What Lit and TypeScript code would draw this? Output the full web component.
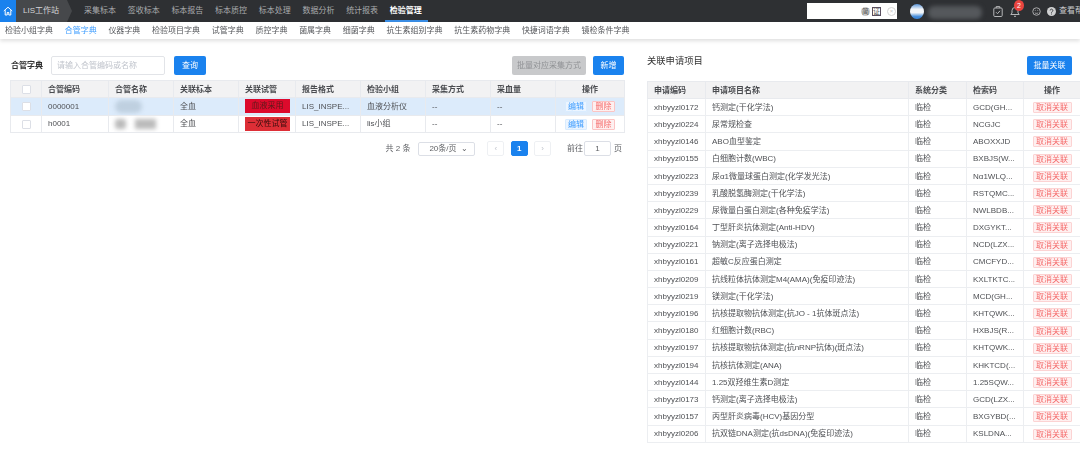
import { LitElement, html, css } from "lit";
import { customElement } from "lit/decorators.js";

const NAV = ["采集标本","签收标本","标本报告","标本质控","标本处理","数据分析","统计报表"];
const SUB = ["检验小组字典","合管字典","仪器字典","检验项目字典","试管字典","质控字典","菌属字典","细菌字典","抗生素组别字典","抗生素药物字典","快捷词语字典","镜检条件字典"];
const ROWS: [string,string,string][] = [
["xhbyyzl0172","钙测定(干化学法)","GCD(GH..."],
["xhbyyzl0224","尿常规检查","NCGJC"],
["xhbyyzl0146","ABO血型鉴定","ABOXXJD"],
["xhbyyzl0155","白细胞计数(WBC)","BXBJS(W..."],
["xhbyyzl0223","尿α1微量球蛋白测定(化学发光法)","Nα1WLQ..."],
["xhbyyzl0239","乳酸脱氢酶测定(干化学法)","RSTQMC..."],
["xhbyyzl0229","尿微量白蛋白测定(各种免疫学法)","NWLBDB..."],
["xhbyyzl0164","丁型肝炎抗体测定(Anti-HDV)","DXGYKT..."],
["xhbyyzl0221","钠测定(离子选择电极法)","NCD(LZX..."],
["xhbyyzl0161","超敏C反应蛋白测定","CMCFYD..."],
["xhbyyzl0209","抗线粒体抗体测定M4(AMA)(免疫印迹法)","KXLTKTC..."],
["xhbyyzl0219","镁测定(干化学法)","MCD(GH..."],
["xhbyyzl0196","抗核提取物抗体测定(抗JO - 1抗体斑点法)","KHTQWK..."],
["xhbyyzl0180","红细胞计数(RBC)","HXBJS(R..."],
["xhbyyzl0197","抗核提取物抗体测定(抗nRNP抗体)(斑点法)","KHTQWK..."],
["xhbyyzl0194","抗核抗体测定(ANA)","KHKTCD(..."],
["xhbyyzl0144","1.25双羟维生素D测定","1.25SQW..."],
["xhbyyzl0173","钙测定(离子选择电极法)","GCD(LZX..."],
["xhbyyzl0157","丙型肝炎病毒(HCV)基因分型","BXGYBD(..."],
["xhbyyzl0206","抗双链DNA测定(抗dsDNA)(免疫印迹法)","KSLDNA..."],
];

@customElement("app-root")
export class AppRoot extends LitElement {
  static styles = css`
    :host { display:block; width:1080px; height:451px; overflow:hidden; background:#fff; }
    .page { width:1080px; height:451px; overflow:hidden; font:8px/1.2 "Liberation Sans","Noto Sans CJK SC",sans-serif; color:#4f5155; filter:blur(.4px); }
    .top { height:22px; background:#2e3033; display:flex; align-items:stretch; color:#a9abad; }
    .home { width:16px; background:#1a82ee; display:flex; align-items:center; justify-content:center; flex:none; }
    .tab { width:56px; flex:none; background:#46484b; color:#d4d5d6; display:flex; align-items:center; padding-left:7px; box-sizing:border-box; clip-path:polygon(0 0,51px 0,56px 50%,51px 100%,0 100%); }
    .nav { display:flex; gap:11.7px; padding-left:12px; }
    .nav span { display:flex; align-items:center; width:32px; }
    .nav .on { color:#fff; font-weight:700; width:43px; margin-left:-5px; padding-left:5px; box-sizing:border-box; border-bottom:2px solid #3a8ee6; height:22px; padding-top:2px; }
    .tools { margin-left:auto; display:flex; align-items:center; width:273px; flex:none; }
    .search { width:90px; height:16px; background:#fff; box-sizing:border-box; display:flex; align-items:center; justify-content:flex-end; color:#555; margin-right:13px; flex:none; }
    .search b { font-weight:400; font-size:7px; width:9px; height:9px; line-height:9px; text-align:center; box-sizing:border-box; }
    .search b.round { border-radius:50%; background:#c9c9c9; margin-right:2px; }
    .search b.sq { border:1px solid #5a5060; line-height:7px; margin-right:6px; }
    .search i { width:9px; height:9px; box-sizing:border-box; margin-right:1px; border:1px solid #d5d5d5; border-radius:50%; color:#c5c5c5; font:normal 6px/7px "Liberation Sans",sans-serif; text-align:center; }
    .avatar { width:14px; height:15px; flex:none; border-radius:50%; background:linear-gradient(#5a94d8 0,#f2f5f8 35%,#f2f5f8 58%,#3f88d8 85%); }
    .who { width:54px; height:13px; margin-left:4px; margin-right:11px; flex:none; border-radius:6px; background:#55585c; filter:blur(2px); transform:translateY(1px); }
    .ic { display:block; flex:none; }
    .bell { position:relative; display:block; width:10px; height:11px; margin:0 12px 0 7px; flex:none; }
    .badge { position:absolute; left:4px; top:-6px; width:10px; height:11px; border-radius:50%; background:#e8443f; color:#fff; font-size:7px; line-height:11px; text-align:center; }
    .help { white-space:nowrap; width:33px; margin-left:6px; flex:none; overflow:hidden; display:flex; align-items:center; gap:3px; color:#c8c9ca; }

    .sub { height:17px; display:flex; align-items:center; gap:11.7px; padding-left:5px; box-shadow:0 2px 4px rgba(0,0,0,.13); color:#55575b; position:relative; }
    .sub .on { color:#409eff; }

    .main { display:flex; padding-top:17px; }
    .left { width:647px; box-sizing:border-box; padding:0 23px 0 10px; flex:none; }
    .right { flex:1; min-width:0; }
    .bar { display:flex; align-items:center; height:19px; }
    .lbl { color:#333; font-weight:700; width:40px; margin-left:1px; }
    .input { width:114px; height:19px; box-sizing:border-box; border:1px solid #e2e4e8; border-radius:2px; padding-left:5px; display:flex; align-items:center; color:#c0c4cc; }
    .btn { height:19px; display:flex; align-items:center; justify-content:center; border-radius:2px; background:#1a82ee; color:#fff; box-sizing:border-box; }
    .q { width:32px; margin-left:9px; }
    .gray { width:74px; background:#c8c9cb; color:#909295; margin-left:auto; }
    .new { width:31px; margin-left:7px; }
    .title { font-size:9.3px; line-height:10px; color:#333; align-self:flex-start; }
    .batch { width:45px; margin-left:auto; margin-right:8px; }

    table { border-collapse:collapse; table-layout:fixed; width:100%; border:1px solid #e4e7ed; }
    th,td { border:1px solid #e8eaee; padding:1px 0 0 6px; text-align:left; white-space:nowrap; overflow:hidden; font-weight:400; box-sizing:border-box; }
    th { background:#f2f2f3; color:#4a4c50; font-weight:700; height:17px; }
    .lt { margin-top:5px; }
    .lt td { height:17.5px; }
    .rt { margin-top:6px; width:433px; }
    .rt td { height:17.2px; border-color:#eceef1; }
    .sel td { background:#dcebfb; }
    th.c,td.c { text-align:center; padding:1px 0 0; }
    .cb { display:inline-block; width:7px; height:7px; background:#fff; border:1px solid #dcdfe6; border-radius:1px; vertical-align:middle; }
    .tube { display:block; width:45px; height:14px; line-height:14px; text-align:center; color:#5c1a1a; margin-top:-1px; }
    .t1 { background:#dc0a2c; }
    .t2 { background:#dd2e36; color:#3a0d0d; }
    .blob { display:inline-block; vertical-align:middle; filter:blur(2px); }
    .b1 { width:27px; height:13px; border-radius:7px; background:#bfd0e0; }
    .b2 { width:11px; height:10px; background:#bbb; margin-right:9px; border-radius:3px; }
    .b3 { width:21px; height:10px; background:#bbb; }
    .ops { display:flex; justify-content:center; gap:5px; }
    .tag { height:11px; line-height:10px; box-sizing:border-box; text-align:center; border-radius:1px; border:1px solid; }
    .edit { width:22px; background:#ecf5ff; border-color:#d9ecff; color:#409eff; }
    .del { width:23px; background:#fef0f0; border-color:#fbc4c4; color:#f56c6c; }
    .cancel { width:39px; margin:0 auto; background:#fef0f0; border-color:#fcd3d3; color:#f56c6c; }

    .pager { display:flex; align-items:center; justify-content:flex-end; margin-top:8px; height:15px; color:#606266; }
    .pl { padding-right:2px; }
    .pr { padding-right:1px; }
    .select { width:57px; height:14px; box-sizing:border-box; border:1px solid #dcdfe6; border-radius:2px; margin-left:8px; margin-right:12px; display:flex; align-items:center; justify-content:space-between; padding:0 6px 0 10px; }
    .pg { width:17px; height:15px; box-sizing:border-box; border:1px solid #eef0f3; border-radius:2px; display:flex; align-items:center; justify-content:center; color:#c0c4cc; margin-right:6.3px; }
    .pg.act { background:#1a82ee; color:#fff; font-weight:700; border-color:#1a82ee; }
    .pg.last { margin-right:16px; }
    .go { width:27px; height:15px; box-sizing:border-box; border:1px solid #dcdfe6; border-radius:2px; display:flex; align-items:center; justify-content:center; margin:0 3px 0 1px; }
  `;

  private pager(total: string, pages: string[], cls: string) {
    return html`<div class="pager ${cls}">
      ${total ? html`<span>${total}</span>` : ""}
      <div class="select"><span>20条/页</span><span>⌄</span></div>
      <div class="pg">‹</div>
      ${pages.map((p, i) => html`<div class="pg ${i === 0 ? "act" : ""}">${p}</div>`)}
      <div class="pg last">›</div>
      <span>前往</span><div class="go">1</div><span>页</span>
    </div>`;
  }

  render() {
    return html`<div class="page">
      <div class="top">
        <div class="home"><svg width="10" height="10" viewBox="0 0 10 10" fill="none" stroke="#fff" stroke-width="1"><path d="M.8 5 5 1.2 9.2 5M2.2 4.2V9h2V6.5h1.6V9h2V4.2"/></svg></div>
        <div class="tab">LIS工作站</div>
        <div class="nav">${NAV.map(n => html`<span>${n}</span>`)}<span class="on">检验管理</span></div>
        <div class="tools">
          <div class="search"><b class="round">简</b><b class="sq">证</b><i>×</i></div>
          <div class="avatar"></div>
          <div class="who"></div>
          <svg class="ic" width="10" height="11" viewBox="0 0 10 11" fill="none" stroke="#b5b6b8"><rect x=".8" y="2" width="8.4" height="8.5" rx="1"/><path d="M3.2 2V.6h3.6V2M3 6.2l1.5 1.5L7 4.8"/></svg>
          <span class="bell"><svg width="10" height="11" viewBox="0 0 10 11" fill="none" stroke="#b5b6b8"><path d="M.8 8.5h8.4L8 7V4.5a3 3 0 0 0-6 0V7zM4 10.3h2"/></svg><span class="badge">2</span></span>
          <svg class="ic" width="9" height="9" viewBox="0 0 12 12" fill="none" stroke="#b5b6b8" stroke-width="1.2"><circle cx="6" cy="6" r="5"/><path d="M3.8 7.8c1 .9 3.4.9 4.4 0M3.8 4.5h1M7.2 4.5h1"/></svg>
          <div class="help"><svg width="9" height="9" viewBox="0 0 10 10" style="flex:none"><circle cx="5" cy="5" r="5" fill="#d0d1d2"/><path d="M3.5 3.8a1.5 1.5 0 1 1 2.2 1.4c-.5.3-.7.5-.7 1.1M5 7.3v1" fill="none" stroke="#2e3033"/></svg><span>查看帮助</span></div>
        </div>
      </div>
      <div class="sub">${SUB.map((s, i) => html`<span class=${i === 1 ? "on" : ""}>${s}</span>`)}</div>
      <div class="main">
        <div class="left">
          <div class="bar">
            <span class="lbl">合管字典</span>
            <div class="input">请输入合管编码或名称</div>
            <div class="btn q">查询</div>
            <div class="btn gray">批量对应采集方式</div>
            <div class="btn new">新增</div>
          </div>
          <table class="lt">
            <colgroup><col style="width:31px"><col style="width:67px"><col style="width:65px"><col style="width:65px"><col style="width:57px"><col style="width:65px"><col style="width:65px"><col style="width:65px"><col style="width:65px"><col style="width:69px"></colgroup>
            <thead><tr><th class="c"><span class="cb"></span></th><th>合管编码</th><th>合管名称</th><th>关联标本</th><th>关联试管</th><th>报告格式</th><th>检验小组</th><th>采集方式</th><th>采血量</th><th class="c">操作</th></tr></thead>
            <tbody>
              <tr class="sel"><td class="c"><span class="cb"></span></td><td>0000001</td><td><span class="blob b1"></span></td><td>全血</td><td><span class="tube t1">血液采用</span></td><td>LIS_INSPE...</td><td>血液分析仪</td><td>--</td><td>--</td><td class="c"><div class="ops"><div class="tag edit">编辑</div><div class="tag del">删除</div></div></td></tr>
              <tr><td class="c"><span class="cb"></span></td><td>h0001</td><td><span class="blob b2"></span><span class="blob b3"></span></td><td>全血</td><td><span class="tube t2">一次性试管</span></td><td>LIS_INSPE...</td><td>lis小组</td><td>--</td><td>--</td><td class="c"><div class="ops"><div class="tag edit">编辑</div><div class="tag del">删除</div></div></td></tr>
            </tbody>
          </table>
          ${this.pager("共 2 条", ["1"], "pl")}
        </div>
        <div class="right">
          <div class="bar"><span class="title">关联申请项目</span><div class="btn batch">批量关联</div></div>
          <table class="rt">
            <colgroup><col style="width:58px"><col style="width:203px"><col style="width:58px"><col style="width:57px"><col style="width:57px"></colgroup>
            <thead><tr><th>申请编码</th><th>申请项目名称</th><th>系统分类</th><th>检索码</th><th class="c">操作</th></tr></thead>
            <tbody>${ROWS.map(r => html`<tr><td>${r[0]}</td><td>${r[1]}</td><td>临检</td><td>${r[2]}</td><td class="c"><div class="tag cancel">取消关联</div></td></tr>`)}</tbody>
          </table>
          ${this.pager("", ["1","2","3","4","5","6","7"], "pr")}
        </div>
      </div>
    </div>`;
  }
}
